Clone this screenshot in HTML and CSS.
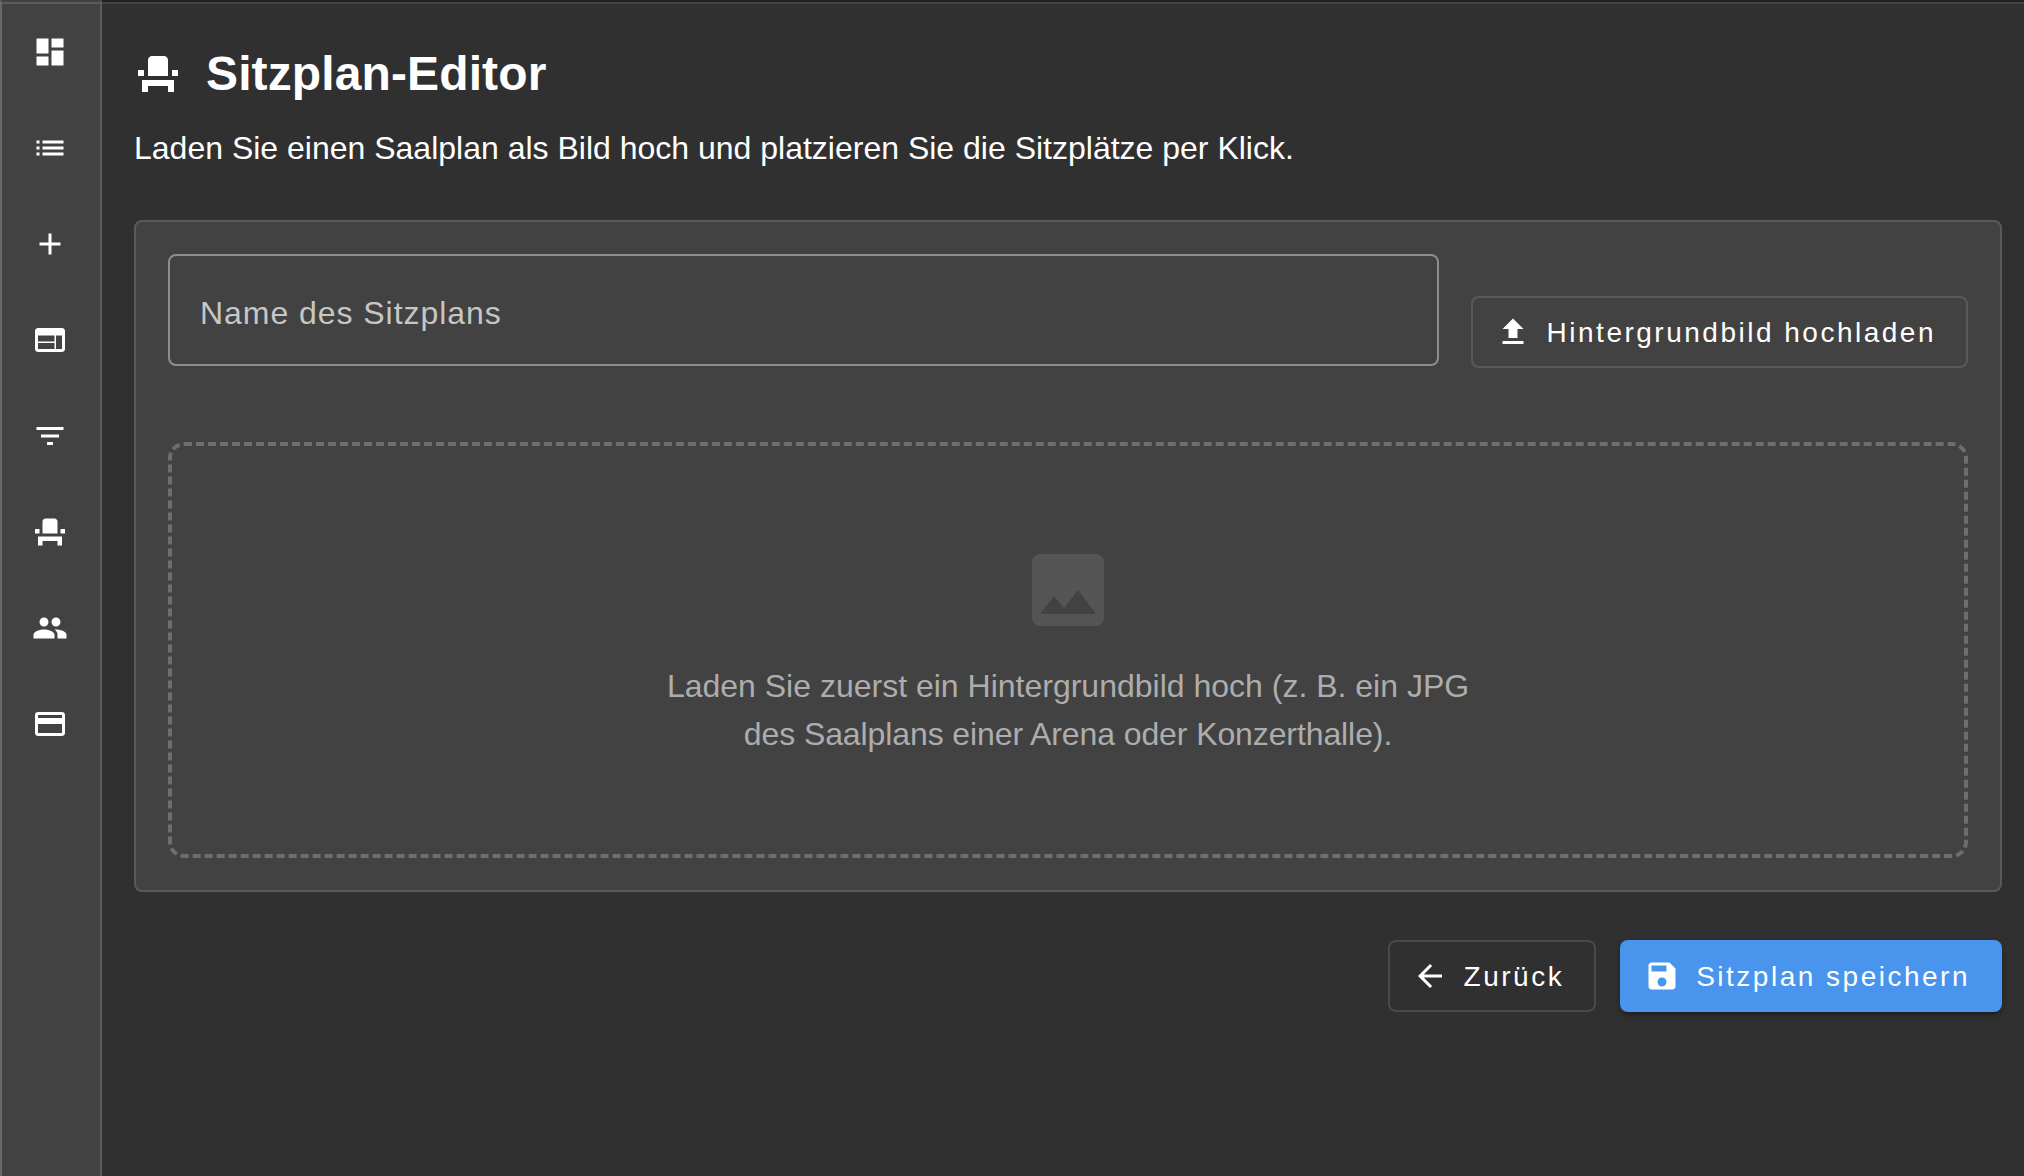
FILE: index.html
```html
<!DOCTYPE html>
<html lang="de">
<head>
<meta charset="utf-8">
<title>Sitzplan-Editor</title>
<link rel="stylesheet" href="styles.css">
</head>
<body>
<div class="app">
  <nav class="rail">
    <a class="rail-item"><svg class="icon" viewBox="0 0 24 24"><path d="M3 13h8V3H3v10zm0 8h8v-6H3v6zm10 0h8V11h-8v10zm0-18v6h8V3h-8z"/></svg></a>
    <a class="rail-item"><svg class="icon" viewBox="0 0 24 24"><path d="M3 13h2v-2H3v2zm0 4h2v-2H3v2zm0-8h2V7H3v2zm4 4h14v-2H7v2zm0 4h14v-2H7v2zM7 7v2h14V7H7z"/></svg></a>
    <a class="rail-item"><svg class="icon" viewBox="0 0 24 24"><path d="M19 13h-6v6h-2v-6H5v-2h6V5h2v6h6v2z"/></svg></a>
    <a class="rail-item"><svg class="icon" viewBox="0 0 24 24"><path d="M20 4H4c-1.1 0-1.99.9-1.99 2L2 18c0 1.1.9 2 2 2h16c1.1 0 2-.9 2-2V6c0-1.1-.9-2-2-2zm-5 14H4v-4h11v4zm0-5H4V9h11v4zm5 5h-4V9h4v9z"/></svg></a>
    <a class="rail-item"><svg class="icon" viewBox="0 0 24 24"><path d="M10 18h4v-2h-4v2zM3 6v2h18V6H3zm3 7h12v-2H6v2z"/></svg></a>
    <a class="rail-item"><svg class="icon" viewBox="0 0 24 24"><path d="M4 18v3h3v-3h10v3h3v-6H4zm15-8h3v3h-3zM2 10h3v3H2zm15 3H7V5c0-1.1.9-2 2-2h6c1.1 0 2 .9 2 2v8z"/></svg></a>
    <a class="rail-item"><svg class="icon" viewBox="0 0 24 24"><path d="M16 11c1.66 0 2.99-1.34 2.99-3S17.66 5 16 5c-1.66 0-3 1.34-3 3s1.34 3 3 3zm-8 0c1.66 0 2.99-1.34 2.99-3S9.66 5 8 5C6.34 5 5 6.34 5 8s1.34 3 3 3zm0 2c-2.33 0-7 1.17-7 3.5V19h14v-2.5c0-2.33-4.67-3.5-7-3.5zm8 0c-.29 0-.62.02-.97.05 1.16.84 1.97 1.97 1.97 3.45V19h6v-2.5c0-2.33-4.67-3.5-7-3.5z"/></svg></a>
    <a class="rail-item"><svg class="icon" viewBox="0 0 24 24"><path d="M20 4H4c-1.11 0-1.99.89-1.99 2L2 18c0 1.11.89 2 2 2h16c1.11 0 2-.89 2-2V6c0-1.11-.89-2-2-2zm0 14H4v-6h16v6zm0-10H4V6h16v2z"/></svg></a>
  </nav>
  <main class="content">
    <h1 class="title">
      <svg class="icon title-icon" viewBox="0 0 24 24"><path d="M4 18v3h3v-3h10v3h3v-6H4zm15-8h3v3h-3zM2 10h3v3H2zm15 3H7V5c0-1.1.9-2 2-2h6c1.1 0 2 .9 2 2v8z"/></svg>
      <span>Sitzplan-Editor</span>
    </h1>
    <p class="subtitle">Laden Sie einen Saalplan als Bild hoch und platzieren Sie die Sitzplätze per Klick.</p>
    <section class="card">
      <div class="form-row">
        <label class="field">Name des Sitzplans</label>
        <button class="button outlined"><svg class="icon" viewBox="0 0 24 24"><path d="M9 16h6v-6h4l-7-7-7 7h4zm-4 2h14v2H5z"/></svg><span class="button-label">Hintergrundbild hochladen</span></button>
      </div>
      <div class="dropzone">
        <svg class="icon image-icon" viewBox="0 0 24 24"><path d="M21 19V5c0-1.1-.9-2-2-2H5c-1.1 0-2 .9-2 2v14c0 1.1.9 2 2 2h14c1.1 0 2-.9 2-2zM8.5 13.5l2.5 3.01L14.5 12l4.5 6H5l3.5-4.5z"/></svg>
        <p class="hint">Laden Sie zuerst ein Hintergrundbild hoch (z. B. ein JPG <span class="hint-tight">des Saalplans einer Arena oder Konzerthalle).</span></p>
      </div>
    </section>
    <div class="actions">
      <button class="button outlined"><svg class="icon" viewBox="0 0 24 24"><path d="M20 11H7.83l5.59-5.59L12 4l-8 8 8 8 1.41-1.41L7.83 13H20v-2z"/></svg><span class="button-label">Zurück</span></button>
      <button class="button primary"><svg class="icon" viewBox="0 0 24 24"><path d="M17 3H5c-1.11 0-2 .9-2 2v14c0 1.1.89 2 2 2h14c1.1 0 2-.9 2-2V7l-4-4zm-5 16c-1.66 0-3-1.34-3-3s1.34-3 3-3 3 1.34 3 3-1.34 3-3 3zm3-10H5V5h10v4z"/></svg><span class="button-label">Sitzplan speichern</span></button>
    </div>
  </main>
</div>
</body>
</html>
```
FILE: styles.css
```css
* { box-sizing: border-box; }

body {
  margin: 0;
  background: #303030;
  color: #fff;
  font-family: "Liberation Sans", Arial, Helvetica, sans-serif;
  font-size: 32px;
}

.app {
  display: flex;
  height: 1176px;
  overflow: hidden;
}

.icon {
  display: block;
  flex: none;
  width: 36px;
  height: 36px;
  fill: currentColor;
}

.rail {
  flex: none;
  width: 102px;
  padding: 2px 2px 0 0;
  background: #424242 linear-gradient(#5b5b5b, #5b5b5b) no-repeat 0 0 / 100% 2px;
  border-left: 2px solid #686868;
  border-right: 2px solid #5b5b5b;
  border-top: 2px solid #424242;
}

.rail-item {
  display: flex;
  align-items: center;
  justify-content: center;
  height: 96px;
}

.content {
  flex: 1;
  min-width: 0;
  padding: 44px 22px 0 32px;
  border-top: 2px solid #212121;
  background: linear-gradient(#444, #444) no-repeat 0 0 / 100% 2px;
}

.title {
  display: flex;
  align-items: center;
  gap: 24px;
  margin: 0;
  height: 56px;
  font-size: 48px;
  line-height: 56px;
  letter-spacing: .12px;
}

.title-icon {
  width: 48px;
  height: 48px;
}

.subtitle {
  margin: 22px 0 48px;
  line-height: 48px;
}

.card {
  height: 672px;
  padding: 32px;
  background: #424242;
  border: 2px solid #595959;
  border-radius: 8px;
}

.form-row {
  display: flex;
  align-items: flex-end;
  gap: 32px;
  height: 114px;
}

.field {
  flex: 1;
  align-self: flex-start;
  height: 112px;
  padding: 0 30px;
  border: 2px solid #8e8e8e;
  border-radius: 8px;
  color: #c6c6c6;
  letter-spacing: .95px;
  line-height: 114px;
}

.button {
  display: flex;
  align-items: center;
  gap: 16px;
  height: 72px;
  padding: 0 32px 0 24px;
  border: 0;
  border-radius: 8px;
  background: none;
  color: #fff;
  font: inherit;
  font-size: 28px;
  letter-spacing: 2.5px;
  white-space: nowrap;
}

.button-label {
  padding-top: 2px;
}

.outlined {
  padding: 0 30px 0 22px;
  border: 2px solid rgba(255, 255, 255, .12);
}

.primary {
  background: #4994ec;
  box-shadow: 0 6px 2px -4px rgba(0, 0, 0, .2), 0 4px 4px rgba(0, 0, 0, .14), 0 2px 10px rgba(0, 0, 0, .12);
}

.dropzone {
  display: flex;
  flex-direction: column;
  align-items: center;
  justify-content: center;
  gap: 24px;
  height: 416px;
  margin-top: 74px;
  border: 4px dashed #6e6e6e;
  border-radius: 16px;
}

.image-icon {
  width: 96px;
  height: 96px;
  color: #555;
}

.hint {
  width: 840px;
  margin: 0;
  color: #adadad;
  line-height: 48px;
  text-align: center;
}

.hint-tight {
  letter-spacing: -.1px;
}

.actions {
  display: flex;
  justify-content: flex-end;
  gap: 24px;
  margin-top: 48px;
}
```
